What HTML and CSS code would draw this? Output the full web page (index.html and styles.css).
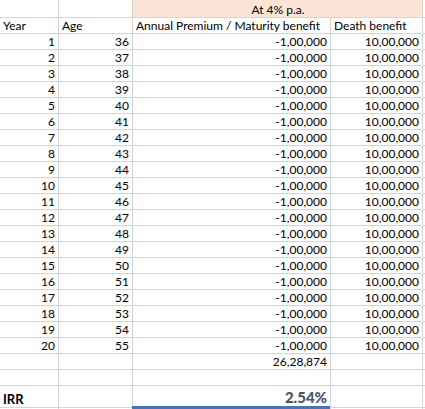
FILE: index.html
```html
<!DOCTYPE html>
<html>
<head>
<meta charset="utf-8">
<link rel="stylesheet" href="styles.css">
</head>
<body>
<div class="sheet">
  <div class="grid" id="grid">
    <div class="c"></div><div class="c"></div><div class="c peach span2 center">At 4% p.a.</div><div class="c edge"></div>
    <div class="c">Year</div><div class="c">Age</div><div class="c">Annual Premium / Maturity benefit</div><div class="c">Death benefit</div><div class="c edge"></div>
  </div>
  <div class="sel"></div>
</div>
<script src="app.js"></script>
</body>
</html>
```
FILE: app.js
```js
const g = document.getElementById('grid');
let html = '';
for (let i = 1; i <= 20; i++) {
  html += `<div class="c r">${i}</div><div class="c r">${35 + i}</div><div class="c r">-1,00,000</div><div class="c r">10,00,000</div><div class="c edge"></div>`;
}
html += `<div class="c"></div><div class="c"></div><div class="c r">26,28,874</div><div class="c"></div><div class="c edge"></div>`;
html += `<div class="c"></div><div class="c"></div><div class="c"></div><div class="c"></div><div class="c edge"></div>`;
html += `<div class="c irr">IRR</div><div class="c"></div><div class="c r pct">2.54%</div><div class="c"></div><div class="c edge"></div>`;
html += `<div class="c"></div><div class="c"></div><div class="c"></div><div class="c"></div><div class="c edge"></div>`;
g.insertAdjacentHTML('beforeend', html);
```
FILE: styles.css
```css
html, body { margin: 0; padding: 0; background: #fff; }
body { width: 425px; height: 409px; overflow: hidden; }
.sheet { position: relative; width: 425px; height: 409px; }
.grid {
  display: grid;
  grid-template-columns: 58px 73px 197px 91px 3px;
  grid-template-rows: 17px 15px repeat(22, 15px) 21px 10px;
  column-gap: 1px;
  row-gap: 1px;
  background: #d4d4d4;
  font-family: Lato, "Open Sans", sans-serif;
  font-size: 12px;
  color: #000;
}
.c {
  background: #fff;
  display: flex;
  align-items: flex-end;
  padding: 0 2px 0 3px;
  line-height: 14px;
  white-space: nowrap;
  overflow: hidden;
}
.edge { padding: 0; }
.r { justify-content: flex-end; padding-right: 3px; }
.center { justify-content: center; }
.peach { background: #fce4d6; }
.span2 { grid-column: span 2; }
.irr { font-weight: bold; font-size: 13px; color: #000; padding-bottom: 1px; }
.pct { font-weight: 900; font-size: 15px; color: #44546a; padding-bottom: 1px; line-height: 18px; }
.sel {
  position: absolute;
  left: 132px;
  top: 406px;
  width: 198px;
  height: 3px;
  background: #4472c4;
}
```
